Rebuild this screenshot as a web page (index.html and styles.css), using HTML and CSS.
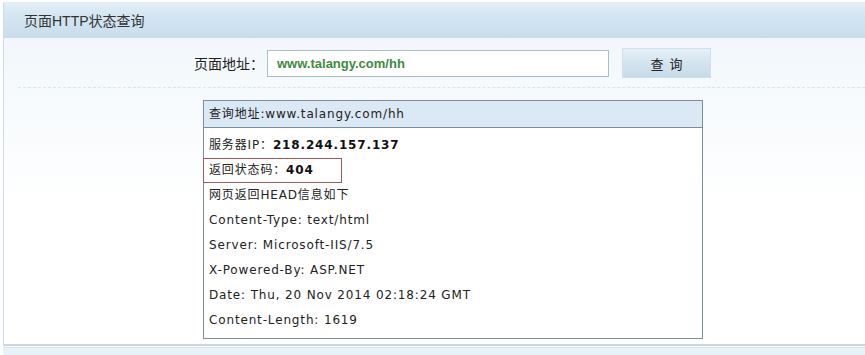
FILE: index.html
```
<!DOCTYPE html>
<html lang="zh-CN">

<head>
    <meta charset="UTF-8">
    <title>页面HTTP状态查询</title>
    <link rel="stylesheet" href="styles.css">
</head>

<body>
    <div class="panel">
        <!-- Title bar -->
        <div class="panel-head">页面HTTP状态查询</div>

        <div class="panel-body">
            <!-- Query form -->
            <form class="query-form" onsubmit="return false;">
                <label class="query-label" for="url">页面地址：</label>
                <input type="text" id="url" class="query-input" value="www.talangy.com/hh">
                <button type="submit" class="query-btn">查&nbsp;&nbsp;询</button>
            </form>

            <!-- Result box -->
            <div class="result">
                <div class="result-head">查询地址:www.talangy.com/hh</div>
                <ul class="result-list">
                    <li>服务器IP：<b>218.244.157.137</b></li>
                    <li><span class="mark">返回状态码：<b>404</b></span></li>
                    <li>网页返回HEAD信息如下</li>
                    <li>Content-Type: text/html</li>
                    <li>Server: Microsoft-IIS/7.5</li>
                    <li>X-Powered-By: ASP.NET</li>
                    <li>Date: Thu, 20 Nov 2014 02:18:24 GMT</li>
                    <li>Content-Length: 1619</li>
                </ul>
            </div>
        </div>
    </div>
    <div class="bottom-bar"></div>
</body>

</html>
```

FILE: styles.css
```
body {
    margin: 0;
    padding: 2px 0 0 3px;
    background-color: #ffffff;
    font-family: "DejaVu Sans", "Noto Sans CJK SC", sans-serif;
    color: #222;
    overflow: hidden;
}

/* Panel */
.panel {
    border-left: 1px solid #cddde8;
    border-top: 1px solid #e4eef5;
    border-bottom: 2px solid #c9d6de;
    background: linear-gradient(to bottom, #edf5fa 0px, #f6fafd 90px, #ffffff 200px);
    height: 344px;
    box-sizing: border-box;
}

.panel-head {
    height: 35px;
    line-height: 37px;
    padding-left: 20px;
    font-family: "Liberation Sans", "Noto Sans CJK SC", sans-serif;
    font-size: 14px;
    color: #333;
    background: linear-gradient(to bottom, #e2eef7 0%, #d3e5f1 40%, #c8ddeb 100%);
}

.panel-body {
    padding-top: 10px;
}

/* Query form */
.query-form {
    display: flex;
    align-items: center;
    margin: 0 0 0 14px;
    padding: 0 0 9px 176px;
    border-bottom: 1px dashed #d6e6f0;
}

.query-label {
    font-family: "Noto Sans CJK SC", sans-serif;
    font-size: 14px;
    color: #222;
    margin-right: 3px;
}

.query-input {
    width: 342px;
    height: 27px;
    box-sizing: border-box;
    border: 1px solid #a9bec8;
    padding: 0 9px;
    font-family: "Liberation Sans", Arial, sans-serif;
    font-size: 13px;
    font-weight: bold;
    color: #3c8c3c;
    background: #fff;
    margin-right: 13px;
}

.query-btn {
    width: 89px;
    height: 30px;
    border: 1px solid #cfe0ec;
    background: linear-gradient(to bottom, #e6f0f7 0%, #d3e4f0 50%, #c5dbea 100%);
    font-family: "Noto Sans CJK SC", sans-serif;
    font-size: 13px;
    color: #222;
    cursor: pointer;
}

/* Result box */
.result {
    width: 500px;
    box-sizing: border-box;
    margin: 12px 0 0 199px;
    border: 1px solid #7c8f98;
    background: #fff;
    letter-spacing: 0.85px;
}

.result-head {
    height: 26px;
    line-height: 26px;
    padding-left: 5px;
    font-size: 12px;
    background-color: #dbe8f5;
    border-bottom: 1px solid #7c8f98;
}

.result-list {
    list-style: none;
    margin: 0;
    padding: 5px 0 5px 0;
}

.result-list li {
    height: 25px;
    line-height: 25px;
    font-size: 12px;
    padding-left: 5px;
}

.result-list b {
    font-weight: bold;
    color: #111;
}

.mark {
    display: inline-block;
    width: 139px;
    height: 25px;
    box-sizing: border-box;
    margin-left: -6px;
    padding-left: 5px;
    border: 1px solid #9a5a5e;
    line-height: 23px;
}

.bottom-bar {
    height: 8px;
    margin-top: 1px;
    background: #e6f1f8;
    border-top: 1px solid #d8e6ef;
}
```
